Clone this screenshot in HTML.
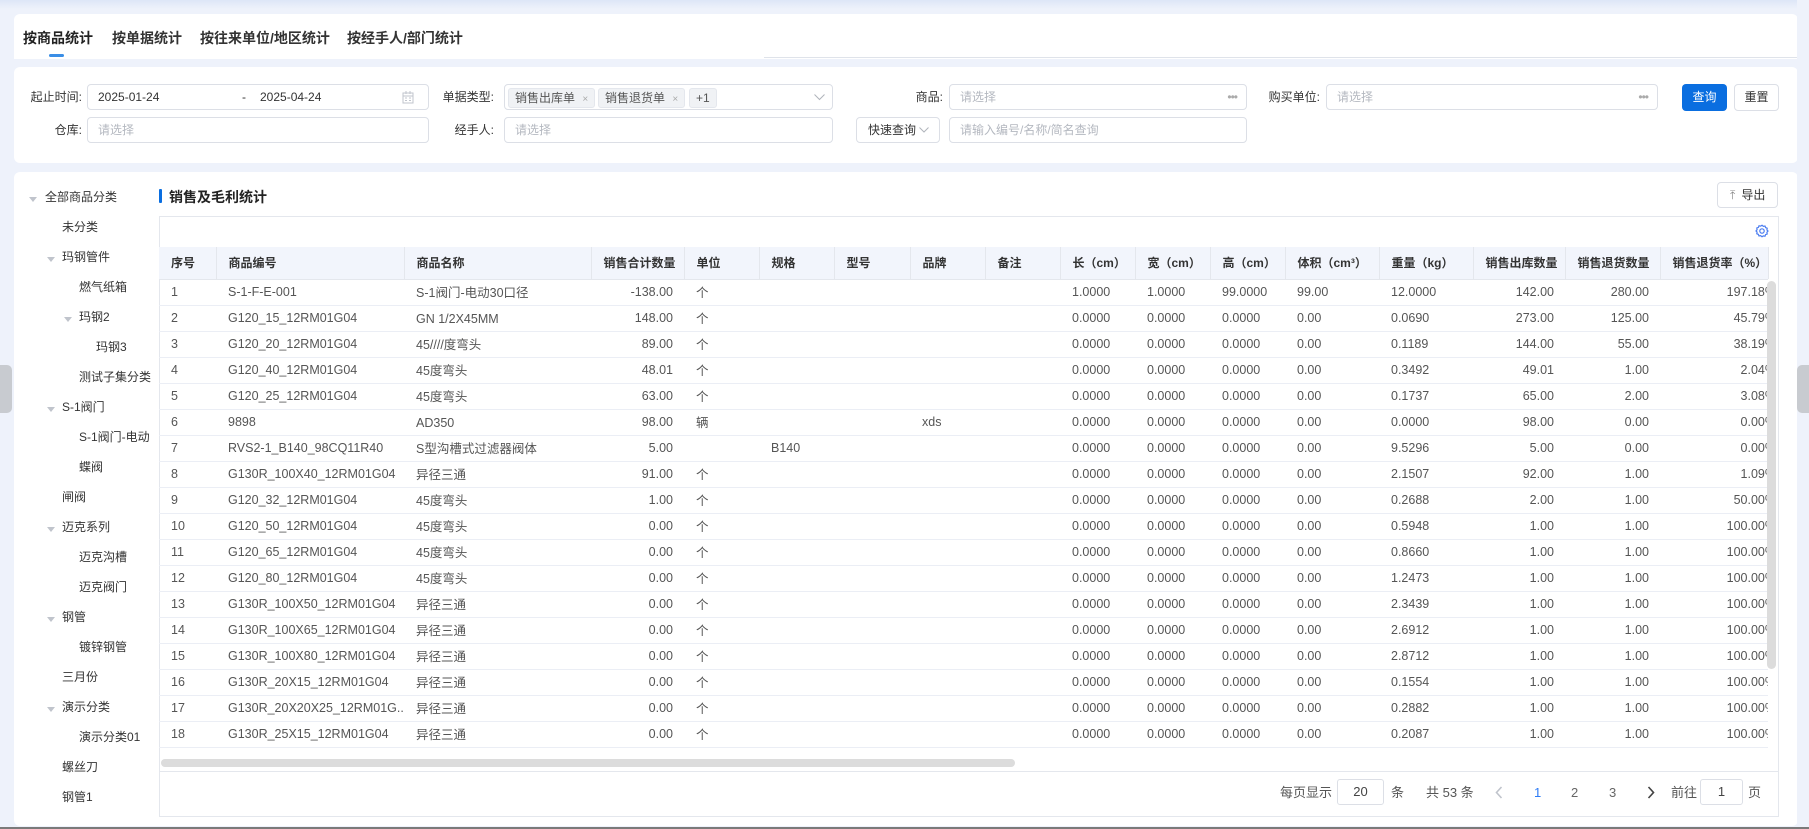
<!DOCTYPE html>
<html><head><meta charset="utf-8">
<style>
*{box-sizing:border-box;margin:0;padding:0}
body{width:1809px;height:829px;background:#eef2fb;font-family:"Liberation Sans","Noto Sans CJK SC",sans-serif;font-size:12px;color:#333;position:relative;overflow:hidden}
.abs{position:absolute}
.panel{position:absolute;background:#fff;border-radius:6px}
.lbl{position:absolute;font-size:12px;color:#333;text-align:right;line-height:26px;white-space:nowrap}
.inp{position:absolute;height:26px;border:1px solid #dcdfe6;border-radius:4px;background:#fff;font-size:12px;line-height:24px;padding-left:10px;color:#333;white-space:nowrap}
.ph{color:#b4b8c0}
.tag{position:absolute;top:3px;height:20px;line-height:18px;background:#f0f2f5;border:1px solid #e4e7ed;border-radius:3px;padding:0 6px;color:#555;font-size:12px}
.tree{position:absolute;font-size:12px;color:#333;line-height:16px;white-space:nowrap}
.tri{position:absolute;width:0;height:0;border-left:4px solid transparent;border-right:4px solid transparent;border-top:5px solid #c0c4cc}
table{position:absolute;left:159px;top:247px;border-collapse:collapse;table-layout:fixed;width:1609px;font-size:12px}
th{background:#f2f5fc;height:32px;text-align:left;font-weight:bold;color:#333;padding-left:12px;border-right:1px solid #e4e7ed;border-bottom:1px solid #e4e7ed;white-space:nowrap;overflow:hidden}
td{height:26px;padding-left:12px;color:#555;border-bottom:1px solid #ebeef5;white-space:nowrap;overflow:hidden;font-size:12.5px;line-height:16px;vertical-align:middle}
td:nth-child(3) span,td:nth-child(5) span{position:relative;top:1px}
td.r{text-align:right;padding-right:11px;padding-left:0}
td.c{text-align:right;padding-right:0;padding-left:0}
td.c span{margin-right:-8px}
.pg{position:absolute;top:781px;line-height:24px;font-size:13px;color:#555}
</style></head><body>
<div class="abs" style="left:0;top:0;width:1809px;height:9px;background:linear-gradient(#dde6f7,#eef2fb)"></div>

<div class="panel" style="left:14px;top:14px;width:1784px;height:45px;border-radius:6px 6px 0 0"></div>
<div class="abs" style="left:23px;top:28px;font-size:14px;font-weight:bold;color:#222">按商品统计</div>
<div class="abs" style="left:112px;top:28px;font-size:14px;font-weight:bold;color:#333">按单据统计</div>
<div class="abs" style="left:200px;top:28px;font-size:14px;font-weight:bold;color:#333">按往来单位/地区统计</div>
<div class="abs" style="left:347px;top:28px;font-size:14px;font-weight:bold;color:#333">按经手人/部门统计</div>
<div class="abs" style="left:49px;top:54px;width:15px;height:3px;border-radius:2px;background:#3a8ee6"></div>
<div class="abs" style="left:764px;top:57px;width:1034px;height:1px;background:#dfe3ea"></div>

<div class="panel" style="left:14px;top:67px;width:1784px;height:96px"></div>
<div class="lbl" style="left:20px;top:84px;width:62px">起止时间:</div>
<div class="inp" style="left:87px;top:84px;width:342px">2025-01-24<span style="position:absolute;left:154px">-</span><span style="position:absolute;left:172px">2025-04-24</span>
<svg style="position:absolute;left:314px;top:6px" width="12" height="13" viewBox="0 0 12 13"><rect x="1" y="2" width="10" height="10" fill="none" stroke="#c0c4cc"/><path d="M1 5h10M4 0v3M8 0v3M3 7h2M7 7h2M3 9.5h2M7 9.5h2" stroke="#c0c4cc"/></svg></div>
<div class="lbl" style="left:430px;top:84px;width:64px">单据类型:</div>
<div class="inp" style="left:504px;top:84px;width:329px;padding-left:0">
<span class="tag" style="left:3px">销售出库单 <span style="color:#aaa;font-size:10px;margin-left:4px">×</span></span>
<span class="tag" style="left:93px">销售退货单 <span style="color:#aaa;font-size:10px;margin-left:4px">×</span></span>
<span class="tag" style="left:184px">+1</span>
<svg style="position:absolute;left:309px;top:9px" width="11" height="7"><path d="M0.5 0.5l5 5 5-5" fill="none" stroke="#b0b4bb"/></svg></div>
<div class="lbl" style="left:900px;top:84px;width:43px">商品:</div>
<div class="inp" style="left:949px;top:84px;width:298px"><span class="ph">请选择</span><span style="position:absolute;right:9px;color:#aaa;letter-spacing:-1px">•••</span></div>
<div class="lbl" style="left:1260px;top:84px;width:60px">购买单位:</div>
<div class="inp" style="left:1326px;top:84px;width:332px"><span class="ph">请选择</span><span style="position:absolute;right:9px;color:#aaa;letter-spacing:-1px">•••</span></div>
<div class="abs" style="left:1682px;top:84px;width:45px;height:27px;background:#0a6ee0;border-radius:4px;color:#fff;text-align:center;line-height:27px;font-size:12px">查询</div>
<div class="abs" style="left:1734px;top:84px;width:45px;height:27px;border:1px solid #dcdfe6;border-radius:4px;color:#333;text-align:center;line-height:25px;font-size:12px">重置</div>

<div class="lbl" style="left:20px;top:117px;width:62px">仓库:</div>
<div class="inp" style="left:87px;top:117px;width:342px"><span class="ph">请选择</span></div>
<div class="lbl" style="left:430px;top:117px;width:64px">经手人:</div>
<div class="inp" style="left:504px;top:117px;width:329px"><span class="ph">请选择</span></div>
<div class="inp" style="left:856px;top:117px;width:84px;padding-left:11px">快速查询<svg style="position:absolute;left:62px;top:9px" width="10" height="6"><path d="M0.5 0.5l4.5 4.5 4.5-4.5" fill="none" stroke="#b0b4bb"/></svg></div>
<div class="inp" style="left:949px;top:117px;width:298px"><span class="ph">请输入编号/名称/简名查询</span></div>

<div class="panel" style="left:14px;top:172px;width:1784px;height:654px"></div>
<div class="abs" style="left:0;top:365px;width:12px;height:48px;background:#c8cbd0;border-radius:0 5px 5px 0"></div>
<div class="abs" style="left:1797px;top:0;width:12px;height:829px;background:#eef2fb"></div>
<div class="abs" style="left:1797px;top:365px;width:12px;height:48px;background:#c8cbd0;border-radius:5px 0 0 5px"></div>
<div class="abs" style="left:0;top:827px;width:1809px;height:2px;background:#7a7a7a"></div>

<div class="tri" style="left:29px;top:197px"></div><div class="tree" style="left:45px;top:189px">全部商品分类</div>
<div class="tree" style="left:62px;top:219px">未分类</div>
<div class="tri" style="left:47px;top:257px"></div><div class="tree" style="left:62px;top:249px">玛钢管件</div>
<div class="tree" style="left:79px;top:279px">燃气纸箱</div>
<div class="tri" style="left:64px;top:317px"></div><div class="tree" style="left:79px;top:309px">玛钢2</div>
<div class="tree" style="left:96px;top:339px">玛钢3</div>
<div class="tree" style="left:79px;top:369px">测试子集分类</div>
<div class="tri" style="left:47px;top:407px"></div><div class="tree" style="left:62px;top:399px">S-1阀门</div>
<div class="tree" style="left:79px;top:429px">S-1阀门-电动</div>
<div class="tree" style="left:79px;top:459px">蝶阀</div>
<div class="tree" style="left:62px;top:489px">闸阀</div>
<div class="tri" style="left:47px;top:527px"></div><div class="tree" style="left:62px;top:519px">迈克系列</div>
<div class="tree" style="left:79px;top:549px">迈克沟槽</div>
<div class="tree" style="left:79px;top:579px">迈克阀门</div>
<div class="tri" style="left:47px;top:617px"></div><div class="tree" style="left:62px;top:609px">钢管</div>
<div class="tree" style="left:79px;top:639px">镀锌钢管</div>
<div class="tree" style="left:62px;top:669px">三月份</div>
<div class="tri" style="left:47px;top:707px"></div><div class="tree" style="left:62px;top:699px">演示分类</div>
<div class="tree" style="left:79px;top:729px">演示分类01</div>
<div class="tree" style="left:62px;top:759px">螺丝刀</div>
<div class="tree" style="left:62px;top:789px">钢管1</div>

<div class="abs" style="left:159px;top:189px;width:3px;height:14px;background:#0a6ee0;border-radius:1px"></div>
<div class="abs" style="left:169px;top:187px;font-size:14px;font-weight:bold;color:#222">销售及毛利统计</div>
<div class="abs" style="left:1717px;top:182px;width:61px;height:26px;border:1px solid #dcdfe6;border-radius:4px;font-size:12px;line-height:24px;padding-left:12px;color:#333"><span style="color:#888;margin-right:6px">⤒</span>导出</div>

<div class="abs" style="left:159px;top:216px;width:1620px;height:601px;border:1px solid #e4e7ed"></div>
<svg class="abs" style="left:1755px;top:224px" width="14" height="14" viewBox="0 0 14 14"><path d="M7 1.2l1.3 1.1 1.7-.3.6 1.6 1.6.6-.3 1.7L13 7l-1.1 1.3.3 1.7-1.6.6-.6 1.6-1.7-.3L7 12.8l-1.3-1.1-1.7.3-.6-1.6-1.6-.6.3-1.7L1 7l1.1-1.3-.3-1.7 1.6-.6.6-1.6 1.7.3z" fill="none" stroke="#4a7cf0" stroke-width="1.2"/><circle cx="7" cy="7" r="2.2" fill="none" stroke="#4a7cf0" stroke-width="1.2"/></svg>

<table>
<colgroup><col style="width:57px"><col style="width:188px"><col style="width:187px"><col style="width:93px"><col style="width:75px"><col style="width:75px"><col style="width:76px"><col style="width:75px"><col style="width:75px"><col style="width:75px"><col style="width:75px"><col style="width:75px"><col style="width:94px"><col style="width:94px"><col style="width:92px"><col style="width:95px"><col style="width:108px"></colgroup>
<tr><th>序号</th><th>商品编号</th><th>商品名称</th><th>销售合计数量</th><th>单位</th><th>规格</th><th>型号</th><th>品牌</th><th>备注</th><th>长（cm）</th><th>宽（cm）</th><th>高（cm）</th><th>体积（cm³）</th><th>重量（kg）</th><th>销售出库数量</th><th>销售退货数量</th><th>销售退货率（%）</th></tr>
<tr><td>1</td><td>S-1-F-E-001</td><td><span>S-1阀门-电动30口径</span></td><td class="r">-138.00</td><td><span>个</span></td><td></td><td></td><td></td><td></td><td>1.0000</td><td>1.0000</td><td>99.0000</td><td>99.00</td><td>12.0000</td><td class="r">142.00</td><td class="r">280.00</td><td class="c"><span>197.18%</span></td></tr>
<tr><td>2</td><td>G120_15_12RM01G04</td><td><span>GN 1/2X45MM</span></td><td class="r">148.00</td><td><span>个</span></td><td></td><td></td><td></td><td></td><td>0.0000</td><td>0.0000</td><td>0.0000</td><td>0.00</td><td>0.0690</td><td class="r">273.00</td><td class="r">125.00</td><td class="c"><span>45.79%</span></td></tr>
<tr><td>3</td><td>G120_20_12RM01G04</td><td><span>45////度弯头</span></td><td class="r">89.00</td><td><span>个</span></td><td></td><td></td><td></td><td></td><td>0.0000</td><td>0.0000</td><td>0.0000</td><td>0.00</td><td>0.1189</td><td class="r">144.00</td><td class="r">55.00</td><td class="c"><span>38.19%</span></td></tr>
<tr><td>4</td><td>G120_40_12RM01G04</td><td><span>45度弯头</span></td><td class="r">48.01</td><td><span>个</span></td><td></td><td></td><td></td><td></td><td>0.0000</td><td>0.0000</td><td>0.0000</td><td>0.00</td><td>0.3492</td><td class="r">49.01</td><td class="r">1.00</td><td class="c"><span>2.04%</span></td></tr>
<tr><td>5</td><td>G120_25_12RM01G04</td><td><span>45度弯头</span></td><td class="r">63.00</td><td><span>个</span></td><td></td><td></td><td></td><td></td><td>0.0000</td><td>0.0000</td><td>0.0000</td><td>0.00</td><td>0.1737</td><td class="r">65.00</td><td class="r">2.00</td><td class="c"><span>3.08%</span></td></tr>
<tr><td>6</td><td>9898</td><td><span>AD350</span></td><td class="r">98.00</td><td><span>辆</span></td><td></td><td></td><td>xds</td><td></td><td>0.0000</td><td>0.0000</td><td>0.0000</td><td>0.00</td><td>0.0000</td><td class="r">98.00</td><td class="r">0.00</td><td class="c"><span>0.00%</span></td></tr>
<tr><td>7</td><td>RVS2-1_B140_98CQ11R40</td><td><span>S型沟槽式过滤器阀体</span></td><td class="r">5.00</td><td></td><td>B140</td><td></td><td></td><td></td><td>0.0000</td><td>0.0000</td><td>0.0000</td><td>0.00</td><td>9.5296</td><td class="r">5.00</td><td class="r">0.00</td><td class="c"><span>0.00%</span></td></tr>
<tr><td>8</td><td>G130R_100X40_12RM01G04</td><td><span>异径三通</span></td><td class="r">91.00</td><td><span>个</span></td><td></td><td></td><td></td><td></td><td>0.0000</td><td>0.0000</td><td>0.0000</td><td>0.00</td><td>2.1507</td><td class="r">92.00</td><td class="r">1.00</td><td class="c"><span>1.09%</span></td></tr>
<tr><td>9</td><td>G120_32_12RM01G04</td><td><span>45度弯头</span></td><td class="r">1.00</td><td><span>个</span></td><td></td><td></td><td></td><td></td><td>0.0000</td><td>0.0000</td><td>0.0000</td><td>0.00</td><td>0.2688</td><td class="r">2.00</td><td class="r">1.00</td><td class="c"><span>50.00%</span></td></tr>
<tr><td>10</td><td>G120_50_12RM01G04</td><td><span>45度弯头</span></td><td class="r">0.00</td><td><span>个</span></td><td></td><td></td><td></td><td></td><td>0.0000</td><td>0.0000</td><td>0.0000</td><td>0.00</td><td>0.5948</td><td class="r">1.00</td><td class="r">1.00</td><td class="c"><span>100.00%</span></td></tr>
<tr><td>11</td><td>G120_65_12RM01G04</td><td><span>45度弯头</span></td><td class="r">0.00</td><td><span>个</span></td><td></td><td></td><td></td><td></td><td>0.0000</td><td>0.0000</td><td>0.0000</td><td>0.00</td><td>0.8660</td><td class="r">1.00</td><td class="r">1.00</td><td class="c"><span>100.00%</span></td></tr>
<tr><td>12</td><td>G120_80_12RM01G04</td><td><span>45度弯头</span></td><td class="r">0.00</td><td><span>个</span></td><td></td><td></td><td></td><td></td><td>0.0000</td><td>0.0000</td><td>0.0000</td><td>0.00</td><td>1.2473</td><td class="r">1.00</td><td class="r">1.00</td><td class="c"><span>100.00%</span></td></tr>
<tr><td>13</td><td>G130R_100X50_12RM01G04</td><td><span>异径三通</span></td><td class="r">0.00</td><td><span>个</span></td><td></td><td></td><td></td><td></td><td>0.0000</td><td>0.0000</td><td>0.0000</td><td>0.00</td><td>2.3439</td><td class="r">1.00</td><td class="r">1.00</td><td class="c"><span>100.00%</span></td></tr>
<tr><td>14</td><td>G130R_100X65_12RM01G04</td><td><span>异径三通</span></td><td class="r">0.00</td><td><span>个</span></td><td></td><td></td><td></td><td></td><td>0.0000</td><td>0.0000</td><td>0.0000</td><td>0.00</td><td>2.6912</td><td class="r">1.00</td><td class="r">1.00</td><td class="c"><span>100.00%</span></td></tr>
<tr><td>15</td><td>G130R_100X80_12RM01G04</td><td><span>异径三通</span></td><td class="r">0.00</td><td><span>个</span></td><td></td><td></td><td></td><td></td><td>0.0000</td><td>0.0000</td><td>0.0000</td><td>0.00</td><td>2.8712</td><td class="r">1.00</td><td class="r">1.00</td><td class="c"><span>100.00%</span></td></tr>
<tr><td>16</td><td>G130R_20X15_12RM01G04</td><td><span>异径三通</span></td><td class="r">0.00</td><td><span>个</span></td><td></td><td></td><td></td><td></td><td>0.0000</td><td>0.0000</td><td>0.0000</td><td>0.00</td><td>0.1554</td><td class="r">1.00</td><td class="r">1.00</td><td class="c"><span>100.00%</span></td></tr>
<tr><td>17</td><td>G130R_20X20X25_12RM01G...</td><td><span>异径三通</span></td><td class="r">0.00</td><td><span>个</span></td><td></td><td></td><td></td><td></td><td>0.0000</td><td>0.0000</td><td>0.0000</td><td>0.00</td><td>0.2882</td><td class="r">1.00</td><td class="r">1.00</td><td class="c"><span>100.00%</span></td></tr>
<tr><td>18</td><td>G130R_25X15_12RM01G04</td><td><span>异径三通</span></td><td class="r">0.00</td><td><span>个</span></td><td></td><td></td><td></td><td></td><td>0.0000</td><td>0.0000</td><td>0.0000</td><td>0.00</td><td>0.2087</td><td class="r">1.00</td><td class="r">1.00</td><td class="c"><span>100.00%</span></td></tr>
</table>
<div class="abs" style="left:1768px;top:279px;width:10px;height:470px;background:#fff"></div>
<div class="abs" style="left:1767px;top:281px;width:9px;height:388px;background:#dcdcdc;border-radius:5px"></div>
<div class="abs" style="left:161px;top:759px;width:854px;height:8px;background:#dcdcdc;border-radius:4px"></div>
<div class="abs" style="left:160px;top:771px;width:1618px;height:1px;background:#e4e7ed"></div>

<div class="pg" style="left:1280px">每页显示</div>
<div class="abs" style="left:1337px;top:779px;width:47px;height:26px;border:1px solid #dcdfe6;border-radius:3px;text-align:center;line-height:24px;font-size:13px;color:#444">20</div>
<div class="pg" style="left:1391px">条</div>
<div class="pg" style="left:1426px">共 53 条</div>
<svg class="abs" style="left:1495px;top:786px" width="8" height="13"><path d="M6.5 1L1.5 6.5 6.5 12" fill="none" stroke="#c0c4cc" stroke-width="1.6"/></svg>
<div class="pg" style="left:1534px;color:#2e7cf6">1</div>
<div class="pg" style="left:1571px;color:#666">2</div>
<div class="pg" style="left:1609px;color:#666">3</div>
<svg class="abs" style="left:1647px;top:786px" width="8" height="13"><path d="M1.5 1L6.5 6.5 1.5 12" fill="none" stroke="#444" stroke-width="1.6"/></svg>
<div class="pg" style="left:1671px">前往</div>
<div class="abs" style="left:1700px;top:779px;width:43px;height:26px;border:1px solid #dcdfe6;border-radius:3px;text-align:center;line-height:24px;font-size:13px;color:#444">1</div>
<div class="pg" style="left:1748px">页</div>
</body></html>
